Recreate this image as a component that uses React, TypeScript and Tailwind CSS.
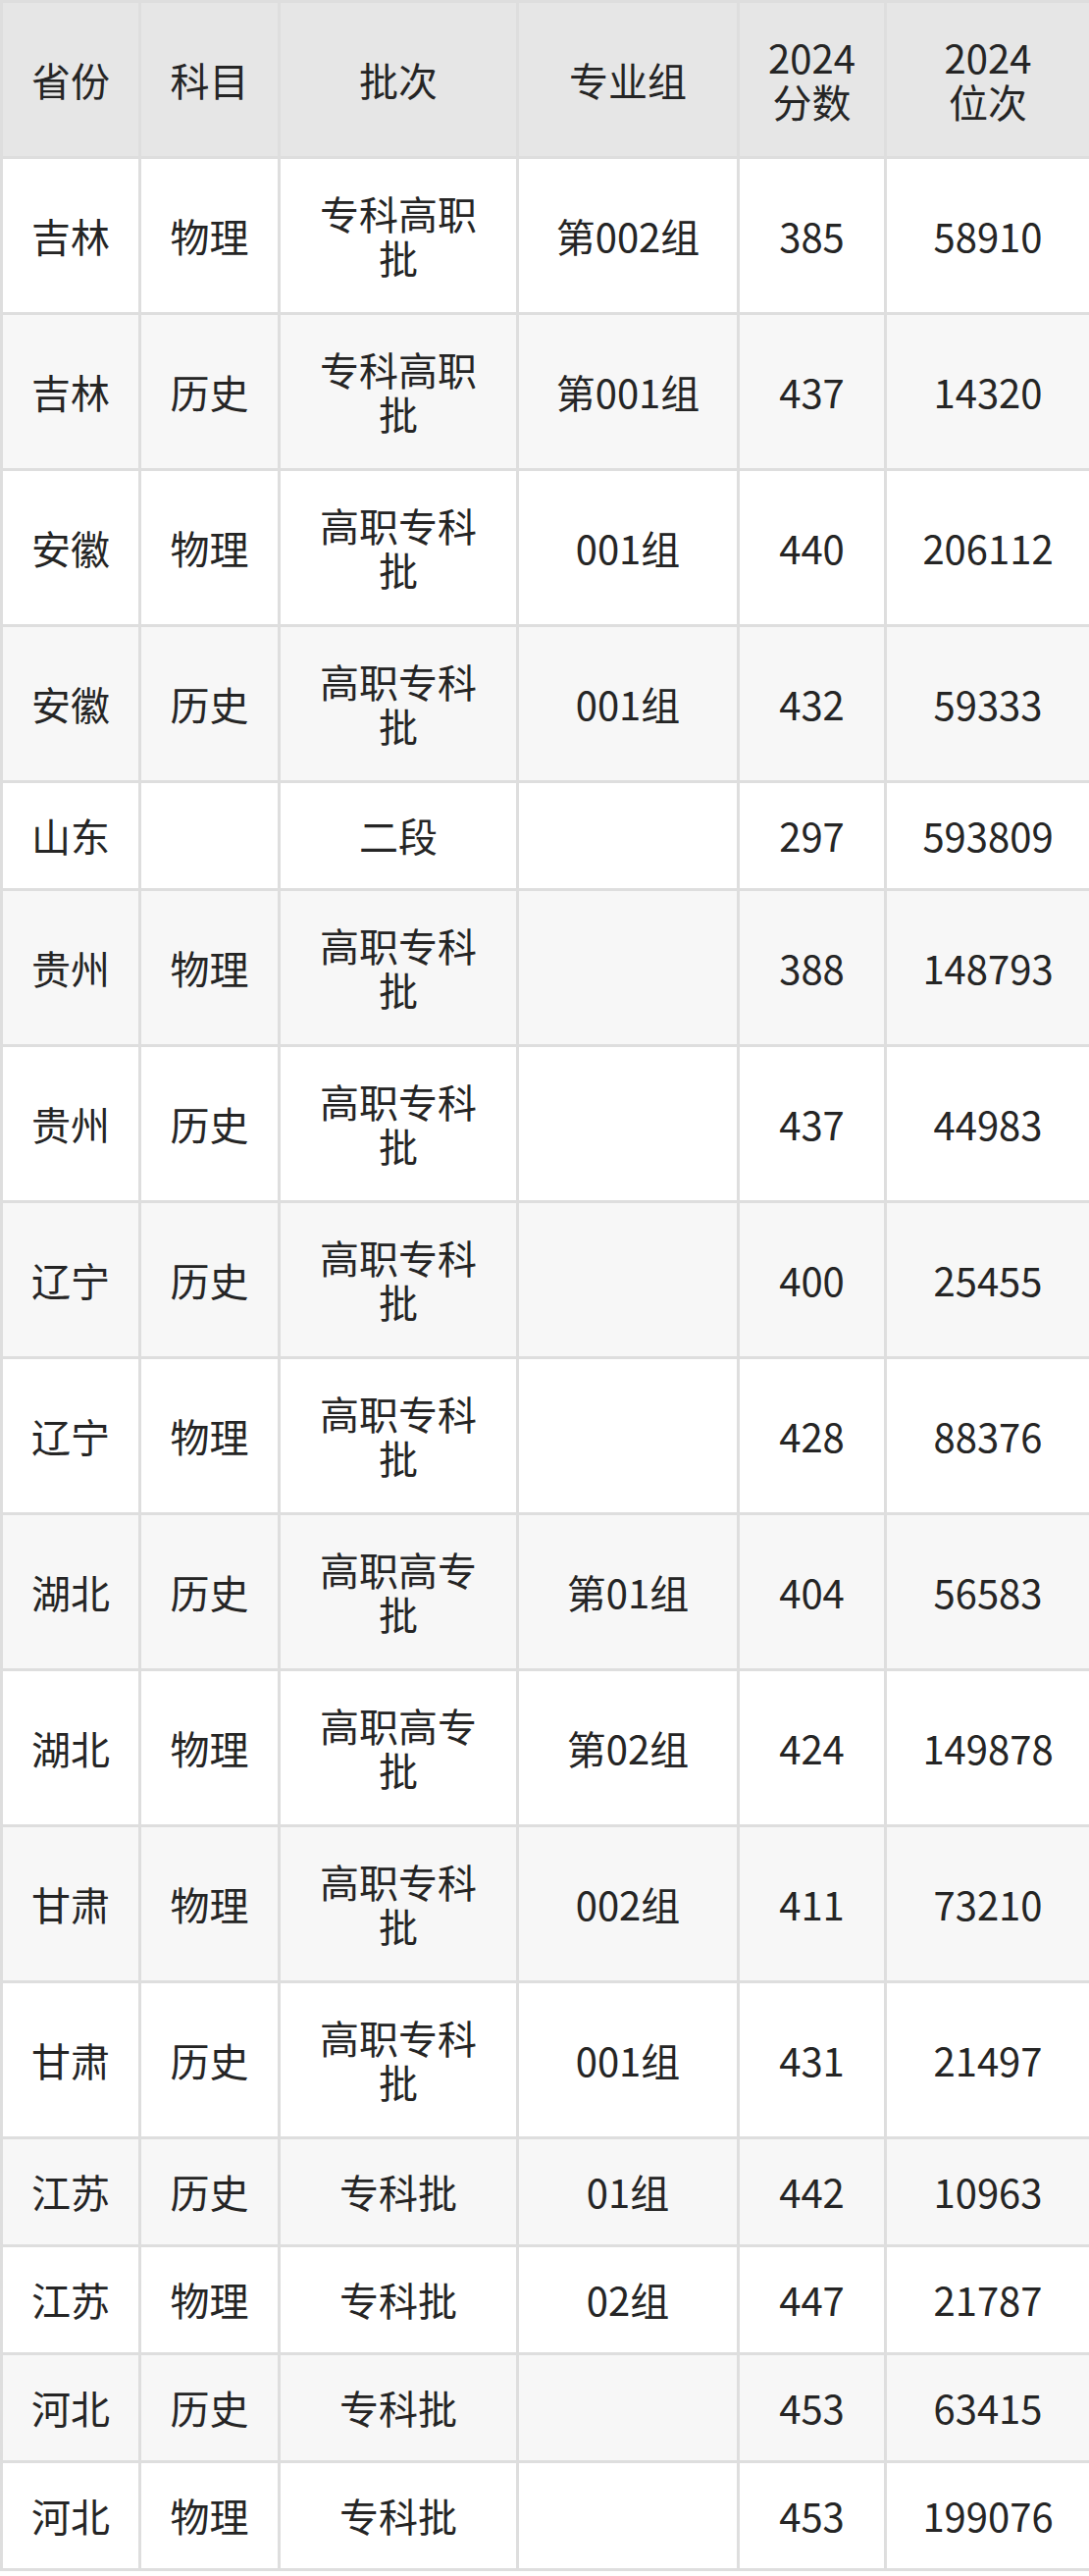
const rows: [string, string, string[], string, string, string][] = [
  ["吉林", "物理", ["专科高职", "批"], "第002组", "385", "58910"],
  ["吉林", "历史", ["专科高职", "批"], "第001组", "437", "14320"],
  ["安徽", "物理", ["高职专科", "批"], "001组", "440", "206112"],
  ["安徽", "历史", ["高职专科", "批"], "001组", "432", "59333"],
  ["山东", "", ["二段"], "", "297", "593809"],
  ["贵州", "物理", ["高职专科", "批"], "", "388", "148793"],
  ["贵州", "历史", ["高职专科", "批"], "", "437", "44983"],
  ["辽宁", "历史", ["高职专科", "批"], "", "400", "25455"],
  ["辽宁", "物理", ["高职专科", "批"], "", "428", "88376"],
  ["湖北", "历史", ["高职高专", "批"], "第01组", "404", "56583"],
  ["湖北", "物理", ["高职高专", "批"], "第02组", "424", "149878"],
  ["甘肃", "物理", ["高职专科", "批"], "002组", "411", "73210"],
  ["甘肃", "历史", ["高职专科", "批"], "001组", "431", "21497"],
  ["江苏", "历史", ["专科批"], "01组", "442", "10963"],
  ["江苏", "物理", ["专科批"], "02组", "447", "21787"],
  ["河北", "历史", ["专科批"], "", "453", "63415"],
  ["河北", "物理", ["专科批"], "", "453", "199076"],
];

const cell = "border-[3px] border-[#dedede] text-center align-middle px-2";

export default function App() {
  return (
    <div className="w-[1110px] bg-white font-['Noto_Sans_CJK_SC','Noto_Sans',sans-serif] text-[40px] leading-[45px] text-[#252525]">
      <table className="w-[1110px] table-fixed border-collapse">
        <colgroup>
          <col className="w-[141px]" />
          <col className="w-[142px]" />
          <col className="w-[243px]" />
          <col className="w-[225px]" />
          <col className="w-[150px]" />
          <col className="w-[209px]" />
        </colgroup>
        <thead>
          <tr className="h-[159px] bg-[#e6e6e6]">
            <th className={cell + " font-normal border-[#d4d4d4]"}>省份</th>
            <th className={cell + " font-normal border-[#d4d4d4]"}>科目</th>
            <th className={cell + " font-normal border-[#d4d4d4]"}>批次</th>
            <th className={cell + " font-normal border-[#d4d4d4]"}>专业组</th>
            <th className={cell + " font-normal border-[#d4d4d4]"}>
              2024
              <br />
              分数
            </th>
            <th className={cell + " font-normal border-[#d4d4d4]"}>
              2024
              <br />
              位次
            </th>
          </tr>
        </thead>
        <tbody>
          {rows.map((r, i) => (
            <tr
              key={i}
              className={
                (r[2].length > 1 ? "h-[159px] " : "h-[110px] ") +
                (i % 2 === 0 ? "bg-white" : "bg-[#f7f7f7]")
              }
            >
              <td className={cell}>{r[0]}</td>
              <td className={cell}>{r[1]}</td>
              <td className={cell}>
                {r[2].map((t, j) => (
                  <div key={j}>{t}</div>
                ))}
              </td>
              <td className={cell}>{r[3]}</td>
              <td className={cell}>{r[4]}</td>
              <td className={cell}>{r[5]}</td>
            </tr>
          ))}
        </tbody>
      </table>
    </div>
  );
}
